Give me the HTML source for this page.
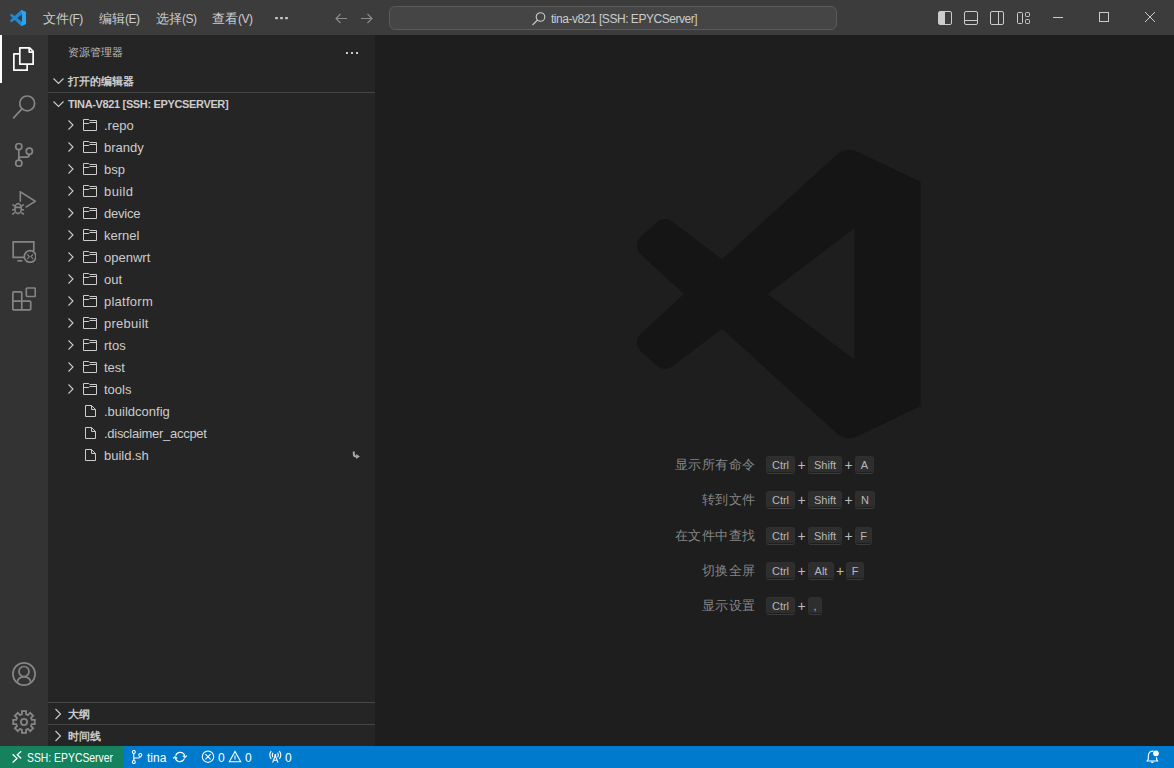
<!DOCTYPE html>
<html><head><meta charset="utf-8">
<style>
*{margin:0;padding:0;box-sizing:border-box}
html,body{width:1174px;height:768px;overflow:hidden;background:#1e1e1e;font-family:"Liberation Sans",sans-serif;font-size:13px;color:#cccccc}
.abs{position:absolute}
#title{left:0;top:0;width:1174px;height:35px;background:#3c3c3c}
#act{left:0;top:35px;width:48px;height:711px;background:#333333}
#side{left:48px;top:35px;width:327px;height:711px;background:#252526}
#editor{left:375px;top:35px;width:799px;height:711px;background:#1e1e1e}
#status{left:0;top:746px;width:1174px;height:22px;background:#007acc;color:#fff}
#remote{left:0;top:0;width:124px;height:22px;background:#16825d}
.menu{top:1px;height:35px;line-height:35px;font-size:13px;color:#cccccc}
.row{position:absolute;left:0;width:327px;height:22px;line-height:22px;font-size:13px;color:#cccccc}
.hdr{position:absolute;left:0;width:327px;height:22px;line-height:22px;font-size:11px;font-weight:bold;color:#cccccc}
.lbl{position:absolute;top:0}
.key{position:absolute;height:18px;line-height:17px;font-size:11px;color:#b8b8b8;background:rgba(128,128,128,0.17);border:1px solid rgba(51,51,51,0.6);border-bottom-color:rgba(68,68,68,0.6);box-shadow:inset 0 -1px 0 rgba(0,0,0,0.36);border-radius:3px;text-align:center;padding:0}
.cmd{position:absolute;font-size:13px;letter-spacing:0.5px;color:rgba(204,204,204,0.6);text-align:right}
.plus{position:absolute;font-size:14px;color:#bdbdbd}
svg{position:absolute;display:block}
.lp{font-size:12px;letter-spacing:-0.5px}
.st{top:1px;height:22px;line-height:22px;font-size:12px;color:#ffffff;white-space:nowrap}
</style></head><body>
<div id="title" class="abs">
  <svg style="left:10px;top:10px" width="16" height="16" viewBox="0 0 100 100"><path fill="#1f8ad2" d="M96.46 10.8 75.86.88a6.23 6.23 0 0 0-7.1 1.2L29.35 38.05 12.18 25.02a4.16 4.16 0 0 0-5.32.24L1.36 30.26a4.17 4.17 0 0 0 0 6.15L16.25 50 1.36 63.59a4.17 4.17 0 0 0 0 6.15l5.5 5a4.16 4.16 0 0 0 5.32.24l17.17-13.03L68.76 97.92a6.22 6.22 0 0 0 7.1 1.2l20.6-9.91A6.25 6.25 0 0 0 100 83.58V16.42a6.25 6.25 0 0 0-3.54-5.63zM75.02 72.7 45.11 50l29.91-22.7z"/><path fill="#2ba3f0" d="M75.86.88a6.23 6.23 0 0 0-7.1 1.2L75.02 27.3V72.7L68.76 97.92a6.22 6.22 0 0 0 7.1 1.2l20.6-9.91A6.25 6.25 0 0 0 100 83.58V16.42a6.25 6.25 0 0 0-3.54-5.63z"/></svg>
  <div class="abs menu" style="left:43px">文件<span class="lp">(F)</span></div>
  <div class="abs menu" style="left:99px">编辑<span class="lp">(E)</span></div>
  <div class="abs menu" style="left:156px">选择<span class="lp">(S)</span></div>
  <div class="abs menu" style="left:212px">查看<span class="lp">(V)</span></div>
  <svg style="left:274px;top:15px" width="16" height="6" viewBox="0 0 16 6" fill="#cccccc"><rect x="1.2" y="2" width="2.6" height="2.2"/><rect x="6.2" y="2" width="2.6" height="2.2"/><rect x="11.2" y="2" width="2.6" height="2.2"/></svg>
  <svg style="left:333px;top:10px" width="16" height="16" viewBox="0 0 16 16" fill="none" stroke="#8b8b8b" stroke-width="1.1"><path d="M3 8.5h11M7.5 4 3 8.5 7.5 13"/></svg>
  <svg style="left:359px;top:10px" width="16" height="16" viewBox="0 0 16 16" fill="none" stroke="#8b8b8b" stroke-width="1.1"><path d="M2 8.5h11M8.5 4 13 8.5 8.5 13"/></svg>
  <div class="abs" style="left:389px;top:6px;width:448px;height:24px;background:#454545;border:1px solid #5a5a5a;border-radius:6px"></div>
  <svg style="left:531px;top:11px" width="16" height="16" viewBox="0 0 16 16" fill="none" stroke="#cccccc" stroke-width="1.1"><circle cx="9.5" cy="6" r="4.3"/><path d="M6.5 9 1.5 14"/></svg>
  <div class="abs" style="left:551px;top:7px;height:24px;line-height:24px;font-size:12px;color:#cccccc;white-space:nowrap;letter-spacing:-0.47px" id="stext">tina-v821 [SSH: EPYCServer]</div>
  <svg style="left:937px;top:10px" width="16" height="16" viewBox="0 0 16 16"><rect x="1.5" y="1.5" width="13" height="13" rx="1.5" fill="none" stroke="#cccccc" stroke-width="1"/><rect x="2" y="2" width="5" height="12" fill="#cccccc"/><path d="M7.5 2v12" stroke="#cccccc"/></svg>
  <svg style="left:963px;top:10px" width="16" height="16" viewBox="0 0 16 16" fill="none" stroke="#cccccc"><rect x="1.5" y="1.5" width="13" height="13" rx="1.5"/><path d="M2 10.5h12"/></svg>
  <svg style="left:989px;top:10px" width="16" height="16" viewBox="0 0 16 16" fill="none" stroke="#cccccc"><rect x="1.5" y="1.5" width="13" height="13" rx="1.5"/><path d="M9.5 2v12"/></svg>
  <svg style="left:1016px;top:10px" width="16" height="16" viewBox="0 0 16 16" fill="none" stroke="#cccccc"><rect x="1.5" y="2.5" width="5" height="11" rx="1"/><rect x="9.5" y="2.5" width="4" height="4" rx="1"/><rect x="9.5" y="9.5" width="4" height="4" rx="1"/></svg>
  <svg style="left:1053px;top:12px" width="10" height="10" viewBox="0 0 10 10"><path d="M0 5.5h10" stroke="#cccccc" stroke-width="1"/></svg>
  <svg style="left:1099px;top:12px" width="10" height="10" viewBox="0 0 10 10"><rect x="0.5" y="0.5" width="9" height="9" fill="none" stroke="#cccccc" stroke-width="1"/></svg>
  <svg style="left:1145px;top:12px" width="10" height="10" viewBox="0 0 10 10"><path d="M0 0 10 10M10 0 0 10" stroke="#cccccc" stroke-width="1"/></svg>
</div>
<div id="act" class="abs">
  <div class="abs" style="left:0;top:0;width:2px;height:48px;background:#ffffff"></div>
  <svg style="left:12px;top:12px" width="24" height="24" viewBox="0 0 24 24" fill="none" stroke="#ffffff" stroke-width="1.7" stroke-linejoin="round"><path d="M7.8 0.85H17.6L21.15 4.4V17.15H7.8Z"/><path d="M17.2 0.85V5.1H21.15"/><path d="M7.8 6.85H1.85V23.15H15.15V17.15"/></svg>
  <svg style="left:12px;top:60px" width="24" height="24" viewBox="0 0 24 24" fill="none" stroke="#858585" stroke-width="1.7"><circle cx="15.2" cy="8.4" r="7.4"/><path d="M9.9 13.9 1.6 22.8" stroke-linecap="round"/></svg>
  <svg style="left:12px;top:108px" width="24" height="24" viewBox="0 0 24 24" fill="none" stroke="#858585" stroke-width="1.7"><circle cx="6.8" cy="3.6" r="3.1"/><circle cx="6.8" cy="20.2" r="3.1"/><circle cx="17.3" cy="8.2" r="3.1"/><path d="M6.8 6.7V17.1M6.8 16.5Q6.8 14.2 9.2 14.2H14.8Q17.3 14.2 17.3 11.3"/></svg>
  <svg style="left:12px;top:156px" width="24" height="24" viewBox="0 0 24 24" fill="none" stroke="#858585" stroke-width="1.6" stroke-linejoin="miter"><path d="M8.3 10.8V0.8L23.4 10.3 13.6 16.4"/><ellipse cx="6.1" cy="17.6" rx="3.2" ry="5"/><path d="M2.9 16.4H9.3M0.3 13.6 2.9 15M11.9 13.6 9.3 15M0.1 18.7H2.9M9.3 18.7H12.1M0.3 23.2 2.9 21.6M11.9 23.2 9.3 21.6"/></svg>
  <svg style="left:12px;top:204px" width="24" height="24" viewBox="0 0 24 24" fill="none" stroke="#858585" stroke-width="1.7"><path d="M12.5 18.3H1.2V2.9H21.8V12"/><path d="M5.4 21.8H10.4"/><circle cx="18.1" cy="17.5" r="5.8"/><path d="M15.3 15.3 17.3 17.6 15.3 19.9M21 15.3 19 17.6 21 19.9" stroke-width="1.2"/></svg>
  <svg style="left:12px;top:252px" width="24" height="24" viewBox="0 0 24 24" fill="none" stroke="#858585" stroke-width="1.7" stroke-linejoin="round"><path d="M0.85 5.8Q0.85 4.9 1.75 4.9H8.85Q9.75 4.9 9.75 5.8V14.1H17.8Q18.7 14.1 18.7 15V22.1Q18.7 22.9 17.8 22.9H1.75Q0.85 22.9 0.85 22V5.8ZM0.85 14.1H9.75V22.9"/><rect x="14.3" y="1" width="9" height="8.5" rx="0.9"/></svg>
  <svg style="left:12px;top:627px" width="24" height="24" viewBox="0 0 24 24" fill="none" stroke="#858585" stroke-width="1.7"><circle cx="12" cy="12" r="11.1"/><circle cx="12" cy="9.5" r="5"/><path d="M5.3 20.2Q6 14.9 12 14.9Q18 14.9 18.7 20.2"/></svg>
  <svg style="left:12px;top:675px" width="24" height="24" viewBox="0 0 24 24" fill="none" stroke="#858585" stroke-width="1.8" stroke-linejoin="miter"><path d="M8.94 4.61 L9.93 4.27 L9.90 1.20 L14.10 1.20 L14.07 4.27 L15.06 4.61 L16.00 5.07 L18.15 2.88 L21.12 5.85 L18.93 8.00 L19.39 8.94 L19.73 9.93 L22.80 9.90 L22.80 14.10 L19.73 14.07 L19.39 15.06 L18.93 16.00 L21.12 18.15 L18.15 21.12 L16.00 18.93 L15.06 19.39 L14.07 19.73 L14.10 22.80 L9.90 22.80 L9.93 19.73 L8.94 19.39 L8.00 18.93 L5.85 21.12 L2.88 18.15 L5.07 16.00 L4.61 15.06 L4.27 14.07 L1.20 14.10 L1.20 9.90 L4.27 9.93 L4.61 8.94 L5.07 8.00 L2.88 5.85 L5.85 2.88 L8.00 5.07Z"/><circle cx="12" cy="12" r="3.1"/></svg>
</div>
<div id="side" class="abs">
  <div class="abs" style="left:20px;top:0;height:35px;line-height:35px;font-size:11px;color:#bbbbbb">资源管理器</div>
  <svg style="left:296px;top:15px" width="16" height="5" viewBox="0 0 16 5" fill="#cccccc"><rect x="2" y="2" width="2" height="2"/><rect x="7" y="2" width="2" height="2"/><rect x="12" y="2" width="2" height="2"/></svg>
  <div class="hdr" style="top:35px"><svg style="left:4px;top:3px" width="16" height="16" viewBox="0 0 16 16" fill="none" stroke="#cccccc" stroke-width="1.1"><path d="M1.5 5.5 6.5 10.5 11.5 5.5"/></svg><span class="lbl" style="left:20px">打开的编辑器</span></div>
  <div class="abs" style="left:0;top:57px;width:327px;height:1px;background:#464646"></div>
  <div class="hdr" style="top:58px"><svg style="left:4px;top:3px" width="16" height="16" viewBox="0 0 16 16" fill="none" stroke="#cccccc" stroke-width="1.1"><path d="M1.5 5.5 6.5 10.5 11.5 5.5"/></svg><span class="lbl" style="left:20px;letter-spacing:-0.35px">TINA-V821 [SSH: EPYCSERVER]</span></div>
  <div class="row" style="top:79px"><svg style="left:18px;top:5px" width="10" height="12" viewBox="0 0 10 12" fill="none" stroke="#cccccc" stroke-width="1.1"><path d="M2.5 1.5 7 6 2.5 10.5"/></svg><svg style="left:34px;top:4px" width="16" height="14" viewBox="0 0 16 14" fill="none" stroke="#cccccc" stroke-width="1"><path d="M1.5 1.5H6.8L7.8 2.5H14.5V12.5H1.5Z"/><path d="M1.5 5.5H6.8L7.8 4.5H14.5"/></svg><span class="lbl" style="left:56px;top:1px">.repo</span></div>
  <div class="row" style="top:101px"><svg style="left:18px;top:5px" width="10" height="12" viewBox="0 0 10 12" fill="none" stroke="#cccccc" stroke-width="1.1"><path d="M2.5 1.5 7 6 2.5 10.5"/></svg><svg style="left:34px;top:4px" width="16" height="14" viewBox="0 0 16 14" fill="none" stroke="#cccccc" stroke-width="1"><path d="M1.5 1.5H6.8L7.8 2.5H14.5V12.5H1.5Z"/><path d="M1.5 5.5H6.8L7.8 4.5H14.5"/></svg><span class="lbl" style="left:56px;top:1px">brandy</span></div>
  <div class="row" style="top:123px"><svg style="left:18px;top:5px" width="10" height="12" viewBox="0 0 10 12" fill="none" stroke="#cccccc" stroke-width="1.1"><path d="M2.5 1.5 7 6 2.5 10.5"/></svg><svg style="left:34px;top:4px" width="16" height="14" viewBox="0 0 16 14" fill="none" stroke="#cccccc" stroke-width="1"><path d="M1.5 1.5H6.8L7.8 2.5H14.5V12.5H1.5Z"/><path d="M1.5 5.5H6.8L7.8 4.5H14.5"/></svg><span class="lbl" style="left:56px;top:1px">bsp</span></div>
  <div class="row" style="top:145px"><svg style="left:18px;top:5px" width="10" height="12" viewBox="0 0 10 12" fill="none" stroke="#cccccc" stroke-width="1.1"><path d="M2.5 1.5 7 6 2.5 10.5"/></svg><svg style="left:34px;top:4px" width="16" height="14" viewBox="0 0 16 14" fill="none" stroke="#cccccc" stroke-width="1"><path d="M1.5 1.5H6.8L7.8 2.5H14.5V12.5H1.5Z"/><path d="M1.5 5.5H6.8L7.8 4.5H14.5"/></svg><span class="lbl" style="left:56px;top:1px;letter-spacing:0.4px">build</span></div>
  <div class="row" style="top:167px"><svg style="left:18px;top:5px" width="10" height="12" viewBox="0 0 10 12" fill="none" stroke="#cccccc" stroke-width="1.1"><path d="M2.5 1.5 7 6 2.5 10.5"/></svg><svg style="left:34px;top:4px" width="16" height="14" viewBox="0 0 16 14" fill="none" stroke="#cccccc" stroke-width="1"><path d="M1.5 1.5H6.8L7.8 2.5H14.5V12.5H1.5Z"/><path d="M1.5 5.5H6.8L7.8 4.5H14.5"/></svg><span class="lbl" style="left:56px;top:1px;letter-spacing:-0.2px">device</span></div>
  <div class="row" style="top:189px"><svg style="left:18px;top:5px" width="10" height="12" viewBox="0 0 10 12" fill="none" stroke="#cccccc" stroke-width="1.1"><path d="M2.5 1.5 7 6 2.5 10.5"/></svg><svg style="left:34px;top:4px" width="16" height="14" viewBox="0 0 16 14" fill="none" stroke="#cccccc" stroke-width="1"><path d="M1.5 1.5H6.8L7.8 2.5H14.5V12.5H1.5Z"/><path d="M1.5 5.5H6.8L7.8 4.5H14.5"/></svg><span class="lbl" style="left:56px;top:1px">kernel</span></div>
  <div class="row" style="top:211px"><svg style="left:18px;top:5px" width="10" height="12" viewBox="0 0 10 12" fill="none" stroke="#cccccc" stroke-width="1.1"><path d="M2.5 1.5 7 6 2.5 10.5"/></svg><svg style="left:34px;top:4px" width="16" height="14" viewBox="0 0 16 14" fill="none" stroke="#cccccc" stroke-width="1"><path d="M1.5 1.5H6.8L7.8 2.5H14.5V12.5H1.5Z"/><path d="M1.5 5.5H6.8L7.8 4.5H14.5"/></svg><span class="lbl" style="left:56px;top:1px">openwrt</span></div>
  <div class="row" style="top:233px"><svg style="left:18px;top:5px" width="10" height="12" viewBox="0 0 10 12" fill="none" stroke="#cccccc" stroke-width="1.1"><path d="M2.5 1.5 7 6 2.5 10.5"/></svg><svg style="left:34px;top:4px" width="16" height="14" viewBox="0 0 16 14" fill="none" stroke="#cccccc" stroke-width="1"><path d="M1.5 1.5H6.8L7.8 2.5H14.5V12.5H1.5Z"/><path d="M1.5 5.5H6.8L7.8 4.5H14.5"/></svg><span class="lbl" style="left:56px;top:1px">out</span></div>
  <div class="row" style="top:255px"><svg style="left:18px;top:5px" width="10" height="12" viewBox="0 0 10 12" fill="none" stroke="#cccccc" stroke-width="1.1"><path d="M2.5 1.5 7 6 2.5 10.5"/></svg><svg style="left:34px;top:4px" width="16" height="14" viewBox="0 0 16 14" fill="none" stroke="#cccccc" stroke-width="1"><path d="M1.5 1.5H6.8L7.8 2.5H14.5V12.5H1.5Z"/><path d="M1.5 5.5H6.8L7.8 4.5H14.5"/></svg><span class="lbl" style="left:56px;top:1px;letter-spacing:0.25px">platform</span></div>
  <div class="row" style="top:277px"><svg style="left:18px;top:5px" width="10" height="12" viewBox="0 0 10 12" fill="none" stroke="#cccccc" stroke-width="1.1"><path d="M2.5 1.5 7 6 2.5 10.5"/></svg><svg style="left:34px;top:4px" width="16" height="14" viewBox="0 0 16 14" fill="none" stroke="#cccccc" stroke-width="1"><path d="M1.5 1.5H6.8L7.8 2.5H14.5V12.5H1.5Z"/><path d="M1.5 5.5H6.8L7.8 4.5H14.5"/></svg><span class="lbl" style="left:56px;top:1px;letter-spacing:0.25px">prebuilt</span></div>
  <div class="row" style="top:299px"><svg style="left:18px;top:5px" width="10" height="12" viewBox="0 0 10 12" fill="none" stroke="#cccccc" stroke-width="1.1"><path d="M2.5 1.5 7 6 2.5 10.5"/></svg><svg style="left:34px;top:4px" width="16" height="14" viewBox="0 0 16 14" fill="none" stroke="#cccccc" stroke-width="1"><path d="M1.5 1.5H6.8L7.8 2.5H14.5V12.5H1.5Z"/><path d="M1.5 5.5H6.8L7.8 4.5H14.5"/></svg><span class="lbl" style="left:56px;top:1px">rtos</span></div>
  <div class="row" style="top:321px"><svg style="left:18px;top:5px" width="10" height="12" viewBox="0 0 10 12" fill="none" stroke="#cccccc" stroke-width="1.1"><path d="M2.5 1.5 7 6 2.5 10.5"/></svg><svg style="left:34px;top:4px" width="16" height="14" viewBox="0 0 16 14" fill="none" stroke="#cccccc" stroke-width="1"><path d="M1.5 1.5H6.8L7.8 2.5H14.5V12.5H1.5Z"/><path d="M1.5 5.5H6.8L7.8 4.5H14.5"/></svg><span class="lbl" style="left:56px;top:1px">test</span></div>
  <div class="row" style="top:343px"><svg style="left:18px;top:5px" width="10" height="12" viewBox="0 0 10 12" fill="none" stroke="#cccccc" stroke-width="1.1"><path d="M2.5 1.5 7 6 2.5 10.5"/></svg><svg style="left:34px;top:4px" width="16" height="14" viewBox="0 0 16 14" fill="none" stroke="#cccccc" stroke-width="1"><path d="M1.5 1.5H6.8L7.8 2.5H14.5V12.5H1.5Z"/><path d="M1.5 5.5H6.8L7.8 4.5H14.5"/></svg><span class="lbl" style="left:56px;top:1px">tools</span></div>
  <div class="row" style="top:365px"><svg style="left:36px;top:4px" width="14" height="14" viewBox="0 0 14 14" fill="none" stroke="#cccccc" stroke-width="1"><path d="M1.5 1.5H7.5L11.5 5.5V12.5H1.5Z"/><path d="M7.5 1.5V5.5H11.5"/></svg><span class="lbl" style="left:56px;top:1px">.buildconfig</span></div>
  <div class="row" style="top:387px"><svg style="left:36px;top:4px" width="14" height="14" viewBox="0 0 14 14" fill="none" stroke="#cccccc" stroke-width="1"><path d="M1.5 1.5H7.5L11.5 5.5V12.5H1.5Z"/><path d="M7.5 1.5V5.5H11.5"/></svg><span class="lbl" style="left:56px;top:1px;letter-spacing:-0.28px">.disclaimer_accpet</span></div>
  <div class="row" style="top:409px"><svg style="left:36px;top:4px" width="14" height="14" viewBox="0 0 14 14" fill="none" stroke="#cccccc" stroke-width="1"><path d="M1.5 1.5H7.5L11.5 5.5V12.5H1.5Z"/><path d="M7.5 1.5V5.5H11.5"/></svg><span class="lbl" style="left:56px;top:1px">build.sh</span><svg style="left:302px;top:5px" width="10" height="12" viewBox="0 0 10 12"><path d="M3.8 2.4V5Q3.8 7.5 6.3 7.5H7" fill="none" stroke="#a8a8a8" stroke-width="2"/><path d="M6.2 5.1 9.9 7.5 6.2 9.9Z" fill="#a8a8a8"/></svg></div>
  <div class="abs" style="left:0;top:667px;width:327px;height:1px;background:#464646"></div>
  <div class="hdr" style="top:668px"><svg style="left:4px;top:3px" width="16" height="16" viewBox="0 0 16 16" fill="none" stroke="#cccccc" stroke-width="1.1"><path d="M3.5 3 8.5 8 3.5 13"/></svg><span class="lbl" style="left:20px">大纲</span></div>
  <div class="abs" style="left:0;top:689px;width:327px;height:1px;background:#464646"></div>
  <div class="hdr" style="top:690px"><svg style="left:4px;top:3px" width="16" height="16" viewBox="0 0 16 16" fill="none" stroke="#cccccc" stroke-width="1.1"><path d="M3.5 3 8.5 8 3.5 13"/></svg><span class="lbl" style="left:20px">时间线</span></div>
</div>
<div id="editor" class="abs">
  <svg style="left:0;top:0" width="799" height="711" viewBox="0 0 799 711"><g transform="translate(261.9 114) scale(2.9)"><path fill="#151515" fill-rule="evenodd" d="M97.8 11.3 75.86.88a6.23 6.23 0 0 0-7.1 1.2L29.35 38.05 12.18 25.02a4.16 4.16 0 0 0-5.32.24L1.36 30.26a4.17 4.17 0 0 0 0 6.15L16.25 50 1.36 63.59a4.17 4.17 0 0 0 0 6.15l5.5 5a4.16 4.16 0 0 0 5.32.24l17.17-13.03L68.76 97.92a6.22 6.22 0 0 0 7.1 1.2L97.8 88.7zM75.02 72.7 45.11 50l29.91-22.7z"/></g></svg>
  <div class="cmd" style="left:180.5px;top:421px;width:200px;height:18px;line-height:18px">显示所有命令</div>
  <div class="key" style="left:391px;top:421px;width:29px">Ctrl</div>
  <div class="plus" style="left:420px;top:421px;width:13px;height:18px;line-height:18px;text-align:center">+</div>
  <div class="key" style="left:433px;top:421px;width:34px">Shift</div>
  <div class="plus" style="left:467px;top:421px;width:13px;height:18px;line-height:18px;text-align:center">+</div>
  <div class="key" style="left:480px;top:421px;width:19px">A</div>
  <div class="cmd" style="left:180.5px;top:456px;width:200px;height:18px;line-height:18px">转到文件</div>
  <div class="key" style="left:391px;top:456px;width:29px">Ctrl</div>
  <div class="plus" style="left:420px;top:456px;width:13px;height:18px;line-height:18px;text-align:center">+</div>
  <div class="key" style="left:433px;top:456px;width:34px">Shift</div>
  <div class="plus" style="left:467px;top:456px;width:13px;height:18px;line-height:18px;text-align:center">+</div>
  <div class="key" style="left:480px;top:456px;width:20px">N</div>
  <div class="cmd" style="left:180.5px;top:492px;width:200px;height:18px;line-height:18px">在文件中查找</div>
  <div class="key" style="left:391px;top:492px;width:29px">Ctrl</div>
  <div class="plus" style="left:420px;top:492px;width:13px;height:18px;line-height:18px;text-align:center">+</div>
  <div class="key" style="left:433px;top:492px;width:34px">Shift</div>
  <div class="plus" style="left:467px;top:492px;width:13px;height:18px;line-height:18px;text-align:center">+</div>
  <div class="key" style="left:480px;top:492px;width:17px">F</div>
  <div class="cmd" style="left:180.5px;top:527px;width:200px;height:18px;line-height:18px">切换全屏</div>
  <div class="key" style="left:391px;top:527px;width:29px">Ctrl</div>
  <div class="plus" style="left:420px;top:527px;width:13px;height:18px;line-height:18px;text-align:center">+</div>
  <div class="key" style="left:433px;top:527px;width:26px">Alt</div>
  <div class="plus" style="left:459px;top:527px;width:12px;height:18px;line-height:18px;text-align:center">+</div>
  <div class="key" style="left:471px;top:527px;width:18px">F</div>
  <div class="cmd" style="left:180.5px;top:562px;width:200px;height:18px;line-height:18px">显示设置</div>
  <div class="key" style="left:391px;top:562px;width:29px">Ctrl</div>
  <div class="plus" style="left:420px;top:562px;width:13px;height:18px;line-height:18px;text-align:center">+</div>
  <div class="key" style="left:433px;top:562px;width:14px">,</div>
</div>
<div id="status" class="abs">
  <div id="remote" class="abs"></div>
  <svg style="left:12px;top:5px" width="10" height="12" viewBox="0 0 10 12" fill="none" stroke="#ffffff" stroke-width="1.25"><path d="M0.6 3.3 5 7.4 0.6 11.5M9.2 0.3 5.25 3.8 9.2 7.5"/></svg>
  <div class="abs st" style="left:27px;transform:scaleX(0.865);transform-origin:0 0">SSH: EPYCServer</div>
  <svg style="left:131px;top:4px" width="12" height="14" viewBox="0 0 12 14" fill="none" stroke="#ffffff" stroke-width="1.1"><circle cx="2.8" cy="2" r="1.5"/><circle cx="2.8" cy="12" r="1.5"/><circle cx="9.3" cy="5" r="1.5"/><path d="M2.8 3.5V10.5M2.8 9.5Q2.8 8 4.3 8H7.5Q9.3 8 9.3 6.5"/></svg>
  <div class="abs st" style="left:147px">tina</div>
  <svg style="left:173px;top:4px" width="16" height="14" viewBox="0 0 16 14" fill="none" stroke="#ffffff" stroke-width="1.2"><path d="M2.7 5.6A4.7 4.7 0 0 1 11.8 6.4M11.4 8.4A4.7 4.7 0 0 1 2.3 7.6"/><path d="M9.9 5.6 11.9 7.4 13.9 5.6M0.2 8.5 2.2 6.7 4.2 8.5" stroke-linejoin="miter"/></svg>
  <svg style="left:201px;top:4px" width="14" height="14" viewBox="0 0 14 14" fill="none" stroke="#ffffff" stroke-width="1.1"><circle cx="7" cy="6.7" r="5.7"/><path d="M4.4 4.1 9.6 9.3M9.6 4.1 4.4 9.3"/></svg>
  <div class="abs st" style="left:218px">0</div>
  <svg style="left:228px;top:4px" width="14" height="14" viewBox="0 0 14 14" fill="none" stroke="#ffffff" stroke-width="1.1"><path d="M7 1.5 1.3 11.8H12.7Z"/><path d="M7 5.5V9.5"/></svg>
  <div class="abs st" style="left:245px">0</div>
  <svg style="left:268px;top:4px" width="15" height="14" viewBox="0 0 15 14" fill="none" stroke="#ffffff" stroke-width="1.1"><path d="M3.2 1.2Q0.4 5 3.2 8.8M11.4 1.2Q14.2 5 11.4 8.8M5 2.8Q3.6 5 5 7.2M9.6 2.8Q11 5 9.6 7.2"/><circle cx="7.3" cy="5" r="1.1" fill="#ffffff" stroke="none"/><path d="M7.3 5.5 4.6 12.6M7.3 5.5 10 12.6M5.6 10.2H9"/></svg>
  <div class="abs st" style="left:285px">0</div>
  <svg style="left:1145px;top:3px" width="16" height="16" viewBox="0 0 16 16" fill="none" stroke="#ffffff" stroke-width="1.1"><path d="M8.6 2.1Q3.6 1.8 3.3 7V10.4L2.1 12H12.6L11.6 10.4V8.2"/><path d="M6.2 12.6Q7.3 14.2 8.4 12.6"/><circle cx="10.9" cy="4.3" r="2.9" fill="#ffffff" stroke="none"/></svg>
</div>
</body></html>
